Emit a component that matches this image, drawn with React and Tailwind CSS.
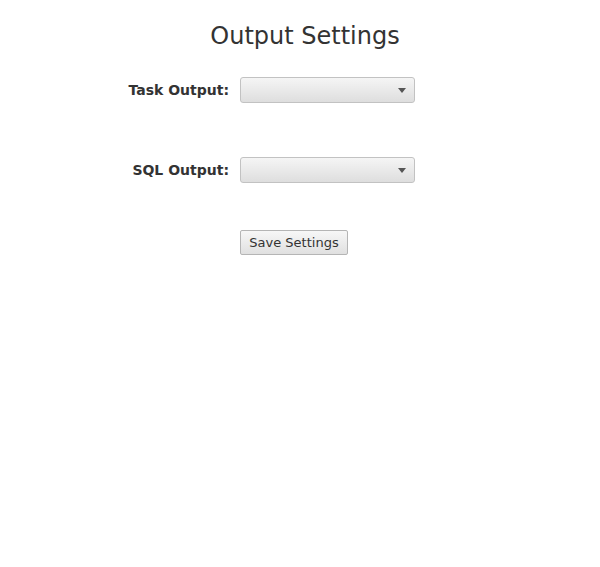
export default function App() {
  const rows = ['Task Output:', 'SQL Output:']

  return (
    <div className="min-h-[567px] bg-white text-[#333] font-['DejaVu_Sans',sans-serif]">
      <h1 className="pt-[22px] pl-[10px] text-center text-[24px] leading-[28px] text-[#333]">Output Settings</h1>

      <div className="mt-[27px] flex flex-col gap-[54px]">
        {rows.map((label) => (
          <div key={label} className="flex items-center">
            <label className="w-[229px] text-right text-[14px] font-bold text-[#333]">{label}</label>
            <div className="ml-[11px] relative w-[175px] h-[26px] rounded-[3px] border border-[#c2c2c2] bg-gradient-to-b from-[#f5f5f5] to-[#dedede]">
              <span className="absolute right-[8px] top-[10px] w-0 h-0 border-l-[4.5px] border-r-[4.5px] border-t-[5px] border-l-transparent border-r-transparent border-t-[#555]" />
            </div>
          </div>
        ))}
      </div>

      <div className="mt-[47px] pl-[240px]">
        <button className="h-[25px] w-[108px] rounded-[2px] border border-[#b5b5b5] bg-gradient-to-b from-[#f7f7f7] to-[#e0e0e0] text-[13px] text-[#333] leading-[23px]">
          Save Settings
        </button>
      </div>
    </div>
  )
}
